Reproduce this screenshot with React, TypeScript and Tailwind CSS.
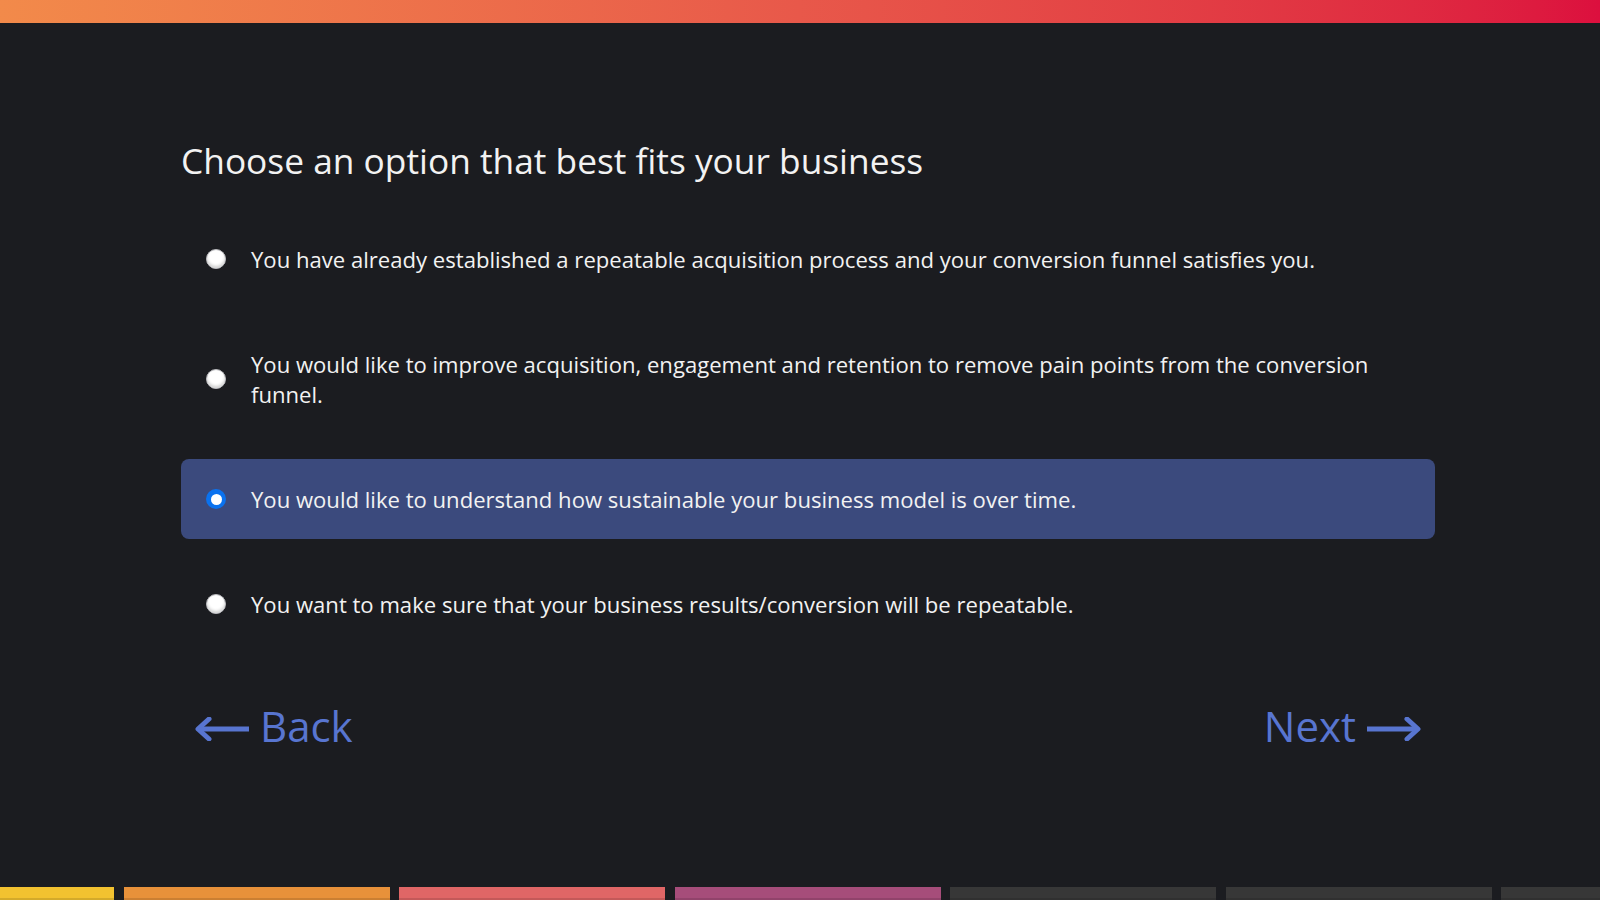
import React from "react";

const options = [
  "You have already established a repeatable acquisition process and your conversion funnel satisfies you.",
  "You would like to improve acquisition, engagement and retention to remove pain points from the conversion funnel.",
  "You would like to understand how sustainable your business model is over time.",
  "You want to make sure that your business results/conversion will be repeatable.",
];

function Radio({ checked }: { checked: boolean }) {
  if (checked) {
    return (
      <span className="flex h-[20px] w-[20px] shrink-0 items-center justify-center rounded-full bg-[#0a72ef]">
        <span className="h-[11px] w-[11px] rounded-full bg-white" />
      </span>
    );
  }
  return (
    <span className="h-[20px] w-[20px] shrink-0 rounded-full border border-[#b8b8bc] bg-white shadow-[inset_0_-2px_3px_rgba(0,0,0,0.18)]" />
  );
}

function ArrowLeft() {
  return (
    <svg className="mt-[6px]" width="56" height="24" viewBox="0 0 56 24" fill="none">
      <path d="M4 12 H55" stroke="#5875d0" strokeWidth="5" />
      <path d="M15 2 L4 12 L15 22" stroke="#5875d0" strokeWidth="5" strokeLinejoin="round" strokeLinecap="round" />
    </svg>
  );
}

function ArrowRight() {
  return (
    <svg className="mt-[6px]" width="56" height="24" viewBox="0 0 56 24" fill="none">
      <path d="M1 12 H52" stroke="#5875d0" strokeWidth="5" />
      <path d="M41 2 L52 12 L41 22" stroke="#5875d0" strokeWidth="5" strokeLinejoin="round" strokeLinecap="round" />
    </svg>
  );
}

export default function App() {
  const selected = 2;
  const bars = ["bg-[#f2c230]", "bg-[#e8913a]", "bg-[#e06666]", "bg-[#a64d7a]", "bg-[#373737]", "bg-[#373737]", "bg-[#373737]"];
  return (
    <div className="relative flex h-[900px] w-[1600px] flex-col overflow-hidden bg-[#1b1c20] font-['Open_Sans',sans-serif] text-[#f2f2f2]">
      <div className="h-[23px] w-full shrink-0 bg-gradient-to-r from-[#f28a4a] via-[#e8584a] to-[#dc0f3e]" />
      <div className="ml-[181px] flex w-[1254px] flex-col">
        <h1 className="mt-[113px] text-[35.3px] leading-[48px] font-normal">Choose an option that best fits your business</h1>
        <div className="mt-[35px] flex flex-col gap-[25px]">
          {options.map((o, i) => (
            <div
              key={i}
              className={`flex items-center gap-[25px] rounded-[8px] px-[25px] py-[25px] ${i === selected ? "bg-[#3b4a7d]" : ""}`}
            >
              <Radio checked={i === selected} />
              <span className="text-[22.1px] leading-[30px]">{o}</span>
            </div>
          ))}
        </div>
        <div className="mt-[54px] flex items-center justify-between px-[13px]">
          <button className="flex items-center gap-[10px] text-[42px] leading-[56px] text-[#5875d0]">
            <ArrowLeft />
            <span>Back</span>
          </button>
          <button className="flex items-center gap-[10px] text-[42px] leading-[56px] text-[#5875d0]">
            <span>Next</span>
            <ArrowRight />
          </button>
        </div>
      </div>
      <div className="mt-auto ml-[-152px] flex gap-[9.5px]">
        {bars.map((b, i) => (
          <div key={i} className={`h-[13px] w-[266px] shrink-0 ${b} shadow-[inset_0_-2px_0_rgba(0,0,0,0.12)]`} />
        ))}
      </div>
    </div>
  );
}
